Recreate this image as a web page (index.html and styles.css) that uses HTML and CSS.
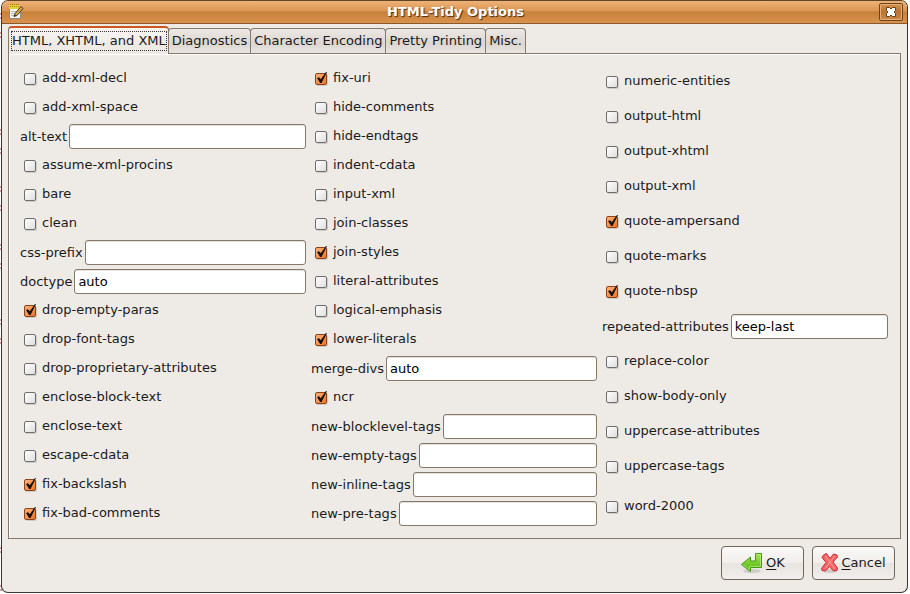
FILE: index.html
```html
<!DOCTYPE html>
<html lang="en">
<head>
<meta charset="utf-8">
<title>HTML-Tidy Options</title>
<link rel="stylesheet" href="styles.css">
</head>
<body>
<svg class="backdrop" width="2" height="594" viewBox="0 0 2 594" aria-hidden="true">
  <path d="M0 14h2M0 18h2M0 33h2M0 37h2M0 130h2M0 134h2M0 149h2M0 153h2M0 187h2M0 191h2M0 206h2M0 210h2M0 245h2M0 249h2M0 264h2M0 268h2M0 320h2M0 324h2M0 339h2M0 343h2M0 548h2M0 552h2M0 586h2M0 590h2" stroke="#b8393d" stroke-width="1"/>
</svg>
<main class="window">
  <header class="titlebar">
    <svg class="app-icon" width="16" height="16" viewBox="0 0 16 16" aria-hidden="true">
      <path d="M1.500 3.500h11v11h-11z" fill="#f5f5ef" stroke="#8b8d84"/>
      <path d="M3 7.500h8M3 9.500h8M3 11.500h6" stroke="#b9bbb4"/>
      <path d="M1 1h11v4H1z" fill="#e8d02c"/>
      <path d="M2.500 0v4M4.500 0v4M6.500 0v4M8.500 0v4M10.500 0v4" stroke="#9c8812" stroke-dasharray="1 1"/>
      <path d="M6 12.500l1-3 6-7 2 2-6 7z" fill="#d9a648" stroke="#4c3a1d"/>
      <path d="M6 12.500l1-2 1 1z" fill="#222"/>
    </svg>
    <h1 class="title">HTML-Tidy Options</h1>
    <button class="close" type="button" aria-label="Close">
      <svg width="12" height="12" viewBox="0 0 12 12" aria-hidden="true">
        <path d="M1.500 1.500h3L6 3l1.500-1.500h3v3L9 6l1.500 1.500v3h-3L6 9l-1.500 1.500h-3v-3L3 6 1.500 4.500z" fill="#fff" stroke="#6b3f14"/>
      </svg>
    </button>
  </header>

  <div class="tabs" role="tablist">
    <button class="tab active" type="button" role="tab" aria-selected="true"><span class="focus">HTML, XHTML, and XML</span></button>
    <button class="tab" type="button" role="tab">Diagnostics</button>
    <button class="tab" type="button" role="tab">Character Encoding</button>
    <button class="tab" type="button" role="tab">Pretty Printing</button>
    <button class="tab" type="button" role="tab">Misc.</button>
  </div>

  <form class="panel" id="options">
    <div class="column">
      <label class="check"><input type="checkbox"><span>add-xml-decl</span></label>
      <label class="check"><input type="checkbox"><span>add-xml-space</span></label>
      <label class="field"><span>alt-text</span><input type="text"></label>
      <label class="check"><input type="checkbox"><span>assume-xml-procins</span></label>
      <label class="check"><input type="checkbox"><span>bare</span></label>
      <label class="check"><input type="checkbox"><span>clean</span></label>
      <label class="field"><span>css-prefix</span><input type="text"></label>
      <label class="field"><span>doctype</span><input type="text" value="auto"></label>
      <label class="check"><input type="checkbox" checked><span>drop-empty-paras</span></label>
      <label class="check"><input type="checkbox"><span>drop-font-tags</span></label>
      <label class="check"><input type="checkbox"><span>drop-proprietary-attributes</span></label>
      <label class="check"><input type="checkbox"><span>enclose-block-text</span></label>
      <label class="check"><input type="checkbox"><span>enclose-text</span></label>
      <label class="check"><input type="checkbox"><span>escape-cdata</span></label>
      <label class="check"><input type="checkbox" checked><span>fix-backslash</span></label>
      <label class="check"><input type="checkbox" checked><span>fix-bad-comments</span></label>
    </div>
    <div class="column">
      <label class="check"><input type="checkbox" checked><span>fix-uri</span></label>
      <label class="check"><input type="checkbox"><span>hide-comments</span></label>
      <label class="check"><input type="checkbox"><span>hide-endtags</span></label>
      <label class="check"><input type="checkbox"><span>indent-cdata</span></label>
      <label class="check"><input type="checkbox"><span>input-xml</span></label>
      <label class="check"><input type="checkbox"><span>join-classes</span></label>
      <label class="check"><input type="checkbox" checked><span>join-styles</span></label>
      <label class="check"><input type="checkbox"><span>literal-attributes</span></label>
      <label class="check"><input type="checkbox"><span>logical-emphasis</span></label>
      <label class="check"><input type="checkbox" checked><span>lower-literals</span></label>
      <label class="field"><span>merge-divs</span><input type="text" value="auto"></label>
      <label class="check"><input type="checkbox" checked><span>ncr</span></label>
      <label class="field"><span>new-blocklevel-tags</span><input type="text"></label>
      <label class="field"><span>new-empty-tags</span><input type="text"></label>
      <label class="field"><span>new-inline-tags</span><input type="text"></label>
      <label class="field"><span>new-pre-tags</span><input type="text"></label>
    </div>
    <div class="column loose">
      <label class="check"><input type="checkbox"><span>numeric-entities</span></label>
      <label class="check"><input type="checkbox"><span>output-html</span></label>
      <label class="check"><input type="checkbox"><span>output-xhtml</span></label>
      <label class="check"><input type="checkbox"><span>output-xml</span></label>
      <label class="check"><input type="checkbox" checked><span>quote-ampersand</span></label>
      <label class="check"><input type="checkbox"><span>quote-marks</span></label>
      <label class="check"><input type="checkbox" checked><span>quote-nbsp</span></label>
      <label class="field"><span>repeated-attributes</span><input type="text" value="keep-last"></label>
      <label class="check"><input type="checkbox"><span>replace-color</span></label>
      <label class="check"><input type="checkbox"><span>show-body-only</span></label>
      <label class="check"><input type="checkbox"><span>uppercase-attributes</span></label>
      <label class="check"><input type="checkbox"><span>uppercase-tags</span></label>
      <label class="check"><input type="checkbox"><span>word-2000</span></label>
    </div>
  </form>

  <footer class="actions">
    <button class="action" type="submit" form="options">
      <svg width="24" height="24" viewBox="0 0 24 24" aria-hidden="true">
        <defs><linearGradient id="green" x1="0" y1="0" x2="0" y2="1"><stop offset="0" stop-color="#a5e64f"/><stop offset="1" stop-color="#4fb512"/></linearGradient></defs>
        <ellipse cx="12" cy="20" rx="9" ry="2" fill="#000" opacity=".12"/>
        <path d="M15.500 2.500h6v14h-11v4l-9-7 9-7.500v4h5z" fill="url(#green)" stroke="#459a12"/>
        <path d="M16.500 3.500h4v12h-11v3l-6.500-5" fill="none" stroke="#c8f48c" opacity=".6"/>
      </svg>
      <span><u>O</u>K</span>
    </button>
    <button class="action" type="button">
      <svg width="18" height="24" viewBox="1 0 18 24" aria-hidden="true">
        <ellipse cx="10" cy="20" rx="7" ry="2" fill="#000" opacity=".12"/>
        <path d="M3.500 4l3-1.500 3.500 5 3.500-4.500 3.500 1 .5 2-4.500 5 4.500 6-.5 2.500-3.500.5-4-4.500-4 4.500-3.500-.5-.5-2 4.500-6-4-5z" fill="#f4686b" stroke="#c92b30" stroke-linejoin="round"/>
        <path d="M5.500 5l9 12.500M14.500 5l-9 12.500" stroke="#fb9a9b" stroke-width="1"/>
      </svg>
      <span><u>C</u>ancel</span>
    </button>
  </footer>
</main>
</body>
</html>
```

FILE: styles.css
```css
* {
  box-sizing: border-box;
}

body {
  margin: 0;
  background: #fff;
  color: #1a1a1a;
  font: 13px/16px "DejaVu Sans", sans-serif;
}

button,
input {
  font: inherit;
  color: inherit;
  margin: 0;
}

.backdrop {
  position: absolute;
  left: 0;
  top: 0;
}

.window {
  position: relative;
  display: flex;
  flex-direction: column;
  min-height: calc(100vh - 1px);
  margin: 0 2px 1px 1px;
  border: 1px solid #3c3530;
  border-top-color: #5f4428;
  border-radius: 7px;
  background: #eeebe7;
  overflow: hidden;
}

.titlebar {
  display: grid;
  grid-template-columns: 24px 1fr 24px;
  align-items: center;
  height: 23px;
  padding: 0 4px 0 6px;
  border-bottom: 1px solid #8a5a2b;
  background: linear-gradient(#eeb277, #db9552 45%, #c8803a 50%, #d8934f);
}

.title {
  margin: 0;
  color: #fff;
  font-size: 13px;
  text-align: center;
  text-shadow: 1px 1px 1px #4a2c0e;
}

.close {
  display: flex;
  align-items: center;
  justify-content: center;
  width: 24px;
  height: 18px;
  padding: 0;
  border: 1px solid #6e4318;
  border-radius: 2px;
  background: linear-gradient(#d7924f, #b87434 50%, #cd8844);
  box-shadow: inset 0 0 0 1px #e3b07c;
}

.tabs {
  display: flex;
  align-items: flex-end;
  padding: 2px 7px 0 6px;
}

.tab {
  height: 25px;
  margin-left: -1px;
  padding: 0 3px;
  border: 1px solid #857868;
  border-bottom: 0;
  border-radius: 4px 4px 0 0;
  background: linear-gradient(#ece8e5, #dcd6d1 60%, #e8e4e1);
  white-space: nowrap;
}

.tab.active {
  position: relative;
  height: 28px;
  margin: 0 0 -1px;
  padding: 0 1px 0 2px;
  border-top: 2px solid #c9591e;
  background: linear-gradient(#f8f6f4, #eeebe7 60%);
}

.focus {
  display: block;
  padding: 1px 0;
  border: 1px dotted #333;
}

.panel {
  display: grid;
  grid-template-columns: repeat(3, 1fr);
  gap: 5px;
  flex: 1;
  margin: 0 6px;
  padding: 10px 12px 10px 11px;
  border: 1px solid #857868;
  box-shadow: inset 1px 1px #fff;
}

.column {
  display: grid;
  grid-auto-rows: 29px;
}

.column.loose {
  grid-template-rows: repeat(12, 35px) 1fr;
}

.check,
.field {
  display: flex;
  align-items: center;
}

.check {
  gap: 6px;
  padding-left: 4px;
}

.field {
  gap: 2px;
}

.check input {
  position: relative;
  appearance: none;
  width: 12px;
  height: 12px;
  margin-top: 1px;
  border: 1px solid #6e6e6e;
  border-radius: 2px;
  background: linear-gradient(135deg, #fff, #dedede);
  box-shadow: 1px 1px #cfcbc6;
}

.check input:checked {
  border-color: #8c4318;
  background: linear-gradient(135deg, #ffb27a, #f07424);
}

.check input:checked::after {
  content: "";
  position: absolute;
  inset: -2px -1px 1px 1px;
  background: #111;
  clip-path: polygon(0 55%, 20% 48%, 38% 66%, 90% 0, 100% 0, 45% 100%, 32% 100%);
}

.check span {
  padding-bottom: 1px;
}

.field input {
  flex: 1;
  min-width: 0;
  height: 25px;
  padding: 0 3px;
  border: 1px solid #857868;
  border-radius: 3px;
  background: #fff;
  color: #000;
  box-shadow: inset 0 1px #e4e1dd;
}

.actions {
  display: flex;
  justify-content: flex-end;
  gap: 8px;
  padding: 7px 12px 12px;
}

.action {
  display: flex;
  align-items: center;
  justify-content: center;
  gap: 2px;
  width: 83px;
  height: 34px;
  padding: 0;
  border: 1px solid #6f665c;
  border-radius: 4px;
  background: linear-gradient(#faf9f8, #f1eeeb 49%, #e8e4e0 50%, #f1eeeb);
  white-space: nowrap;
}

.action u {
  text-underline-offset: 2px;
}
```
